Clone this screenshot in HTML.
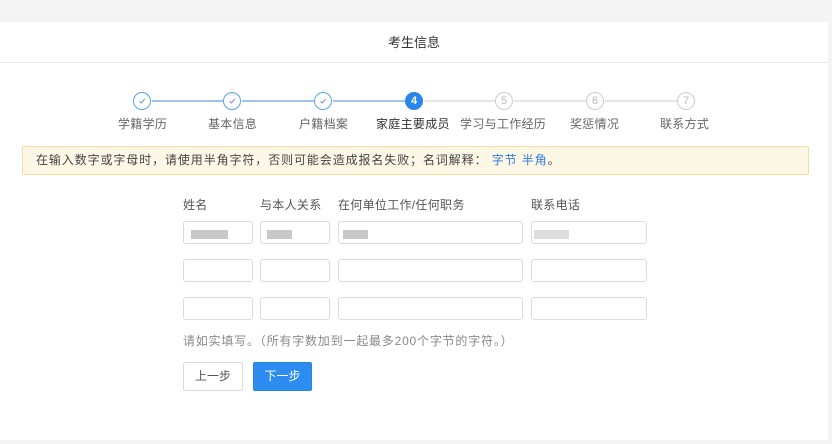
<!DOCTYPE html>
<html><head><meta charset="utf-8"><style>
*{margin:0;padding:0;box-sizing:border-box}
body{width:832px;height:444px;background:#f4f4f4;font-family:"Liberation Sans","Noto Sans CJK SC",sans-serif;position:relative;overflow:hidden;color:#555}
.card{position:absolute;left:0;top:22px;width:828px;height:418px;background:#fff}
.hd{height:41px;border-bottom:1px solid #e8e8e8;text-align:center;line-height:41px;font-size:13px;color:#333}
.c{position:absolute;width:18px;height:18px;border-radius:50%;top:92px;text-align:center;font-size:11px;line-height:16px}
.done{border:1.5px solid #5aa3ee}
.done svg{position:absolute;left:4px;top:4px}
.cur{background:#2a86e8;color:#fff;font-weight:bold;line-height:18px}
.todo{border:1.5px solid #ccc;color:#bbb}
.ln{position:absolute;top:100px;height:2px}
.lb{position:absolute;top:115px;font-size:12px;color:#666;white-space:nowrap;letter-spacing:0.3px}
.note{position:absolute;left:22px;top:146px;width:787px;height:29px;background:#fdf7e5;border:1px solid #f7dca0;border-radius:2px;font-size:12px;line-height:27px;padding-left:13px;color:#444;letter-spacing:0.9px}
.note span{color:#2d7be0}
.fl{position:absolute;top:196px;font-size:12px;color:#555;letter-spacing:0.3px}
.in{position:absolute;height:23px;border:1px solid #dcdcdc;border-radius:3px;background:#fff}
.blur{position:absolute;top:8px;height:9px;background:#c8c8c8}
.tip{position:absolute;left:183px;top:332px;font-size:12px;color:#888;letter-spacing:0.8px}
.b{position:absolute;top:362px;height:29px;font-size:12px;line-height:27px;text-align:center;border-radius:2px}
</style></head><body>
<div class="card"><div class="hd">考生信息</div></div>
<div class="ln" style="left:152px;width:71px;background:#9ec3f0"></div>
<div class="ln" style="left:242px;width:72px;background:#9ec3f0"></div>
<div class="ln" style="left:333px;width:72px;background:#9ec3f0"></div>
<div class="ln" style="left:424px;width:71px;background:#e6e6e6"></div>
<div class="ln" style="left:514px;width:72px;background:#e6e6e6"></div>
<div class="ln" style="left:605px;width:72px;background:#e6e6e6"></div>
<div class="c done" style="left:133px"><svg width="8" height="8" viewBox="0 0 8 8"><path d="M1.5 4.3L3.3 6 6.6 2" fill="none" stroke="#7a8fd0" stroke-width="1"/></svg></div>
<div class="c done" style="left:223px"><svg width="8" height="8" viewBox="0 0 8 8"><path d="M1.5 4.3L3.3 6 6.6 2" fill="none" stroke="#7a8fd0" stroke-width="1"/></svg></div>
<div class="c done" style="left:314px"><svg width="8" height="8" viewBox="0 0 8 8"><path d="M1.5 4.3L3.3 6 6.6 2" fill="none" stroke="#7a8fd0" stroke-width="1"/></svg></div>
<div class="c cur" style="left:405px">4</div>
<div class="c todo" style="left:495px">5</div>
<div class="c todo" style="left:586px">6</div>
<div class="c todo" style="left:677px">7</div>
<div class="lb" style="left:118px">学籍学历</div>
<div class="lb" style="left:208px">基本信息</div>
<div class="lb" style="left:299px">户籍档案</div>
<div class="lb" style="left:376px;color:#333">家庭主要成员</div>
<div class="lb" style="left:460px">学习与工作经历</div>
<div class="lb" style="left:570px">奖惩情况</div>
<div class="lb" style="left:660px">联系方式</div>
<div class="note">在输入数字或字母时，请使用半角字符，否则可能会造成报名失败；名词解释： <span>字节 半角</span>。</div>
<div class="fl" style="left:183px">姓名</div>
<div class="fl" style="left:260px">与本人关系</div>
<div class="fl" style="left:338px">在何单位工作/任何职务</div>
<div class="fl" style="left:531px">联系电话</div>
<div class="in" style="left:183px;top:221px;width:70px"><div class="blur" style="left:7px;width:37px"></div></div>
<div class="in" style="left:260px;top:221px;width:70px"><div class="blur" style="left:6px;width:25px"></div></div>
<div class="in" style="left:338px;top:221px;width:185px"><div class="blur" style="left:4px;width:25px"></div></div>
<div class="in" style="left:531px;top:221px;width:116px"><div class="blur" style="left:2px;width:35px;background:#ddd"></div></div>
<div class="in" style="left:183px;top:259px;width:70px"></div>
<div class="in" style="left:260px;top:259px;width:70px"></div>
<div class="in" style="left:338px;top:259px;width:185px"></div>
<div class="in" style="left:531px;top:259px;width:116px"></div>
<div class="in" style="left:183px;top:297px;width:70px"></div>
<div class="in" style="left:260px;top:297px;width:70px"></div>
<div class="in" style="left:338px;top:297px;width:185px"></div>
<div class="in" style="left:531px;top:297px;width:116px"></div>
<div class="tip">请如实填写。（所有字数加到一起最多200个字节的字符。）</div>
<div class="b" style="left:183px;width:60px;border:1px solid #dcdcdc;color:#555">上一步</div>
<div class="b" style="left:253px;width:59px;background:#2d8cf0;border:1px solid #2a84e0;color:#fff">下一步</div>
</body></html>
